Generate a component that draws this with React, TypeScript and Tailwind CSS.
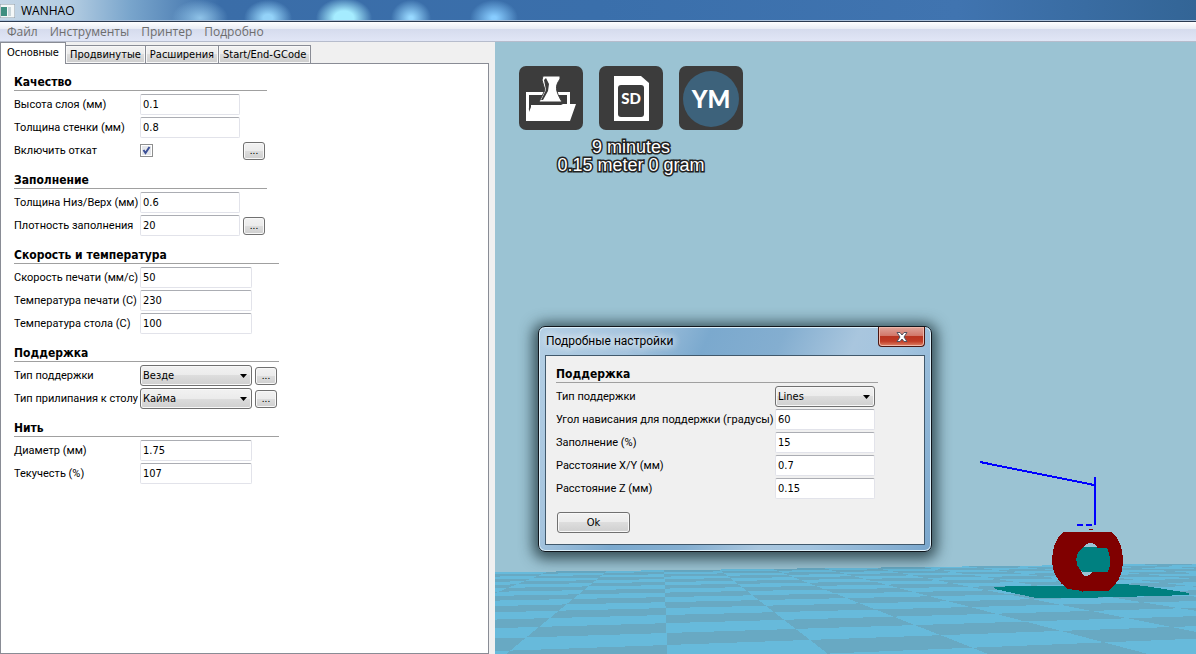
import type { ReactNode } from "react";

const menus = ["Файл", "Инструменты", "Принтер", "Подробно"];
const tabs = ["Основные", "Продвинутые", "Расширения", "Start/End-GCode"];

type Field = {
  id: string;
  label: string;
  value: string | boolean;
  options?: string[];
  more?: boolean;
};

const sections: { title: string; wide?: boolean; fields: Field[] }[] = [
  {
    title: "Качество",
    fields: [
      { id: "layer-height", label: "Высота слоя (мм)", value: "0.1" },
      { id: "wall", label: "Толщина стенки (мм)", value: "0.8" },
      { id: "retraction", label: "Включить откат", value: true, more: true },
    ],
  },
  {
    title: "Заполнение",
    fields: [
      { id: "top-bottom", label: "Толщина Низ/Верх (мм)", value: "0.6" },
      { id: "fill", label: "Плотность заполнения", value: "20", more: true },
    ],
  },
  {
    title: "Скорость и температура",
    wide: true,
    fields: [
      { id: "speed", label: "Скорость печати (мм/с)", value: "50" },
      { id: "print-temp", label: "Температура печати (C)", value: "230" },
      { id: "bed-temp", label: "Температура стола (C)", value: "100" },
    ],
  },
  {
    title: "Поддержка",
    wide: true,
    fields: [
      { id: "support", label: "Тип поддержки", value: "Везде", options: ["Нет", "Везде"], more: true },
      { id: "adhesion", label: "Тип прилипания к столу", value: "Кайма", options: ["Нет", "Кайма"], more: true },
    ],
  },
  {
    title: "Нить",
    wide: true,
    fields: [
      { id: "diameter", label: "Диаметр (мм)", value: "1.75" },
      { id: "flow", label: "Текучесть (%)", value: "107" },
    ],
  },
];

const supportFields: Field[] = [
  { id: "structure", label: "Тип поддержки", value: "Lines", options: ["Lines", "Grid"] },
  { id: "angle", label: "Угол нависания для поддержки (градусы)", value: "60" },
  { id: "support-fill", label: "Заполнение (%)", value: "15" },
  { id: "distance-xy", label: "Расстояние X/Y (мм)", value: "0.7" },
  { id: "distance-z", label: "Расстояние Z (мм)", value: "0.15" },
];

function Control({ field }: { field: Field }) {
  if (typeof field.value === "boolean") {
    return (
      <span className="grid w-[13px]">
        <input
          id={field.id}
          type="checkbox"
          defaultChecked={field.value}
          className="peer col-start-1 row-start-1 size-[13px] appearance-none border border-[#8e8f8f] bg-[#e4e6ea] shadow-[inset_0_0_0_1px_#fff]"
        />
        <svg viewBox="0 0 13 13" className="pointer-events-none invisible col-start-1 row-start-1 size-[13px] peer-checked:visible">
          <path d="M3.5 6 L5.5 9 L9.5 3" fill="none" stroke="#3b4f96" strokeWidth="2" />
        </svg>
      </span>
    );
  }
  if (field.options) {
    return (
      <span className="grid items-center">
        <select
          id={field.id}
          defaultValue={field.value}
          className="col-start-1 row-start-1 h-[21px] w-full appearance-none rounded-[3px] border border-[#707070] bg-[linear-gradient(#f2f2f2,#ebebeb_50%,#dddddd_50%,#cfcfcf)] px-0.5 font-['DejaVu_Sans_Condensed',sans-serif] leading-4 shadow-[inset_0_0_0_1px_#f8f8f8]"
        >
          {field.options.map((o) => (
            <option key={o}>{o}</option>
          ))}
        </select>
        <svg viewBox="0 0 7 4" className="pointer-events-none col-start-1 row-start-1 mr-[5px] h-1 w-[7px] justify-self-end">
          <path d="M0 0h7L3.500 4z" fill="#000" />
        </svg>
      </span>
    );
  }
  return (
    <input
      id={field.id}
      type="text"
      defaultValue={field.value}
      className="h-[21px] w-full rounded-[2px] border border-[#e2e3ea] border-t-[#abadb3] bg-white px-0.5 pb-px font-['DejaVu_Sans_Condensed',sans-serif]"
    />
  );
}

function SectionTitle({ children }: { children: ReactNode }) {
  return (
    <h2 className="mb-0.5 border-b border-[#a0a0a0] font-['DejaVu_Sans_Condensed',sans-serif] text-xs leading-4 font-bold">
      {children}
    </h2>
  );
}

function SettingsPanel() {
  return (
    <form className="flex flex-1 flex-col items-start gap-[10px] border border-[#898c95] bg-white pt-[10px] pl-[13px]">
      {sections.map((s) => (
        <section key={s.title} className={s.wide ? "w-[265px]" : "w-[253px]"}>
          <SectionTitle>{s.title}</SectionTitle>
          {s.fields.map((f) => (
            <div
              key={f.id}
              className={
                s.wide
                  ? "grid h-[23px] grid-cols-[123px_112px_22px] items-center gap-x-[3px]"
                  : "grid h-[23px] grid-cols-[123px_100px_22px] items-center gap-x-[3px]"
              }
            >
              <label htmlFor={f.id} className="whitespace-nowrap">{f.label}</label>
              <Control field={f} />
              {f.more && (
                <button
                  type="button"
                  className="h-[18px] rounded-[3px] border border-[#707070] bg-[linear-gradient(#f2f2f2,#ebebeb_50%,#dddddd_50%,#cfcfcf)] leading-3 shadow-[inset_0_0_0_1px_#f8f8f8]"
                >
                  ...
                </button>
              )}
            </div>
          ))}
        </section>
      ))}
    </form>
  );
}

// Projects a floor grid corner to screen space. Both vanishing points lie just above the far edge.
function project(u: number, v: number) {
  const a = u * 0.0464;
  const c = v * 0.1116;
  const w = 1 + a + c;
  return [(172 + a * 3395 + c * 167.5) / w, (603 + a * 488 + c * 483.5) / w];
}

function quad(u: number, v: number, du = 1, dv = 1) {
  const pts = [project(u, v), project(u + du, v), project(u + du, v + dv), project(u, v + dv)];
  return "M" + pts.map(([x, y]) => x.toFixed(1) + " " + y.toFixed(1)).join("L") + "z";
}

function darkTiles() {
  let d = "";
  for (let u = -8; u < 24; u++) {
    for (let v = -3; v < 15; v++) {
      if ((u + v) % 2 === 0) d += quad(u, v);
    }
  }
  return d;
}

function Scene() {
  return (
    <svg
      viewBox="0 0 701 612"
      preserveAspectRatio="xMinYMin slice"
      shapeRendering="crispEdges"
      className="absolute inset-0 h-full w-full"
    >
      <path d={quad(-8, -3, 32, 18)} fill="#67badb" />
      <path d={darkTiles()} fill="#68a9c3" />
      <path d="M499 545L520 544L569 544L628 542L650 544L694 551V553L625 555L580 556H541L500 547z" fill="#008080" />
      <path d="M568 490H617C624 496 628 506 628 520C628 533 622 543 613 549H588V550H587V549L573 547C563 540 557 531 557 519C557 506 561 496 568 490z" fill="#800000" />
      <path d="M588 505q5-5 9-4q3 1 5 4zM586 529h13q-6 6-10 5q-2-1-3-5z" fill="#9bc3d3" />
      <path d="M588 505h13l1 1h10c4 7 4 17 1 24h-26c-8-7-8-18 1-25z" fill="#008080" />
      <path d="M485 420L599 443M600 435V483M582 483h6M591 483h6" fill="none" stroke="#00f" strokeWidth="2" />
      <path d="M594 487h4v1h-4z" fill="#800000" />
    </svg>
  );
}

function ToolButton({ label, children }: { label: string; children: ReactNode }) {
  return (
    <button type="button" aria-label={label} className="size-16 rounded-[7px] bg-[#3c3c3c]">
      <svg viewBox="0 0 64 64" className="size-16">{children}</svg>
    </button>
  );
}

function Toolbar() {
  return (
    <div className="relative flex w-[272px] flex-col items-center gap-2 pt-6">
      <div className="flex gap-4">
        <ToolButton label="Load">
          <path d="M7 26H51V40H48V29H10V42L7 54z" fill="#fff" />
          <path d="M24 10H41V13C36 20 36 24 43 36H20L26 24L23 14z" fill="#fff" stroke="#3c3c3c" />
          <path d="M27 12L30 18L29 25L24 34H22L27 24L25 14z" fill="#3c3c3c" />
          <path d="M7 54V47L12 39H42L44 38H57L51 55H7z" fill="#fff" />
          <path d="M10 46L12 41V38H10z" fill="#3c3c3c" />
        </ToolButton>
        <ToolButton label="Save toolpath">
          <path d="M15 10H42L50 17V55H15z" fill="#fff" />
          <rect x="19" y="19" width="26" height="32" rx="3" fill="#3c3c3c" />
          <text x="32" y="38" textAnchor="middle" className="fill-white font-[Lato] text-[15px] font-black">SD</text>
        </ToolButton>
        <ToolButton label="YouMagine">
          <circle cx="32" cy="33" r="28" fill="#3d627b" />
          <text x="32" y="42" textAnchor="middle" className="fill-white font-[Lato] text-2xl font-black">YM</text>
        </ToolButton>
      </div>
      <p className="text-center font-['Liberation_Sans',sans-serif] text-lg leading-[18px] text-white [-webkit-text-stroke:3px_#222] [paint-order:stroke_fill]">
        9 minutes
        <br />
        0.15 meter 0 gram
      </p>
    </div>
  );
}

function SupportDialog() {
  return (
    <div
      role="dialog"
      aria-label="Подробные настройки"
      className="absolute top-[284px] left-[43px] w-[394px] rounded-[7px] border border-[#10161c] bg-[linear-gradient(115deg,#b4cfe4,#a5c4de_20%,#7ba9ce_35%,#84aed0_50%,#a9c6de_65%,#a3c4df_75%,#79a6cc)] px-1.5 pb-1.5 shadow-[inset_0_0_0_1px_#dff1fb,0_2px_14px_5px_rgba(20,40,45,0.75)]"
    >
      <div className="flex h-7 items-start justify-between">
        <h1 className="pt-1.5 pl-px font-['Roboto',sans-serif] text-xs leading-4 [text-shadow:0_0_8px_#fff,0_0_8px_#fff]">
          Подробные настройки
        </h1>
        <button
          type="button"
          aria-label="Закрыть"
          className="flex h-5 w-[47px] items-center justify-center rounded-b-[4px] border border-t-0 border-[#4b1712] bg-[linear-gradient(#dfa59a,#d2786a_45%,#b93520_50%,#c03b25_75%,#e08468)] shadow-[inset_0_0_0_1px_#f0b8aa]"
        >
          <svg viewBox="0 0 12 10" className="h-[10px] w-3">
            <path d="M1 0.500h3l2 2.500l2-2.500h3L8 5l3 4.500H8L6 7L4 9.500H1L4 5z" fill="#fff" stroke="#53535f" />
          </svg>
        </button>
      </div>
      <form className="flex flex-col items-start border border-[#41596c] bg-[#f0f0f0] pt-[10px] pb-[11px] pl-[10px]">
        <section className="w-[322px]">
          <SectionTitle>Поддержка</SectionTitle>
          {supportFields.map((f) => (
            <div key={f.id} className="grid h-[23px] grid-cols-[219px_100px] items-center">
              <label htmlFor={f.id} className="whitespace-nowrap">{f.label}</label>
              <Control field={f} />
            </div>
          ))}
        </section>
        <button
          type="button"
          className="mt-3 ml-px h-[21px] w-[73px] rounded-[3px] border border-[#707070] bg-[linear-gradient(#f2f2f2,#ebebeb_50%,#dddddd_50%,#cfcfcf)] font-['DejaVu_Sans_Condensed',sans-serif] shadow-[inset_0_0_0_1px_#f8f8f8]"
        >
          Ok
        </button>
      </form>
    </div>
  );
}

export default function App() {
  return (
    <div className="flex min-h-screen flex-col bg-[#f0f0f0] font-['Roboto',sans-serif] text-[11px] leading-4 text-black">
      <header className="flex h-[22px] items-center gap-1.5 border-b border-[#2b3a50] bg-[radial-gradient(ellipse_28px_20px_at_344px_18px,#a5ecff_35%,transparent),radial-gradient(ellipse_20px_18px_at_411px_18px,#97d8ff_10%,transparent),radial-gradient(ellipse_24px_18px_at_494px_18px,#87ccff_10%,transparent),radial-gradient(ellipse_24px_18px_at_268px_18px,#93d2f8_20%,transparent),radial-gradient(ellipse_28px_18px_at_200px_18px,#8fc3e8,transparent),linear-gradient(90deg,#c4d6e6,#b4cde2_70px,#79a5cc_130px,#3a6da8_220px,#3a6fab_50%,#4074b0_80%,#336596)] shadow-[inset_0_-1px_0_#a9c0da]">
        <svg viewBox="0 0 15 14" className="h-[14px] w-[15px]">
          <rect x="0" y="0" width="15" height="14" fill="#f4f8f8" stroke="#8a98a4" />
          <rect x="1" y="3" width="6" height="9" fill="#3f8f80" />
          <rect x="8" y="3" width="3" height="9" fill="#c9d6da" />
        </svg>
        <span className="font-['Open_Sans',sans-serif] text-xs">WANHAO</span>
      </header>
      <nav className="flex h-5 items-center gap-3 border-b border-[#b6bccc] bg-[linear-gradient(#fff,#e9edf5_35%,#d5dbed_35%,#e1e6f6)] px-[7px] font-['Open_Sans',sans-serif] text-xs text-[#6d6d6d]">
        {menus.map((m) => (
          <button key={m} type="button">{m}</button>
        ))}
      </nav>
      <main className="flex flex-1">
        <div className="flex w-[495px] shrink-0 flex-col pr-1.5">
          <div role="tablist" className="flex h-[21px] items-end font-['DejaVu_Sans_Condensed',sans-serif]">
            {tabs.map((t, i) => (
              <button
                key={t}
                type="button"
                role="tab"
                aria-selected={i === 0}
                className={
                  i === 0
                    ? "z-10 -mb-px h-[22px] border border-b-0 border-[#898c95] bg-white px-1.5 pb-0.5"
                    : "h-[18px] border border-b-0 border-l-0 border-[#898c95] bg-[linear-gradient(#f3f3f3,#ebebeb_50%,#dddddd_50%,#cdcdcd)] px-1 shadow-[inset_0_0_0_1px_#f8f8f8]"
                }
              >
                {t}
              </button>
            ))}
          </div>
          <SettingsPanel />
        </div>
        <div className="relative flex-1 overflow-hidden bg-[#9bc3d3]">
          <Scene />
          <Toolbar />
          <SupportDialog />
        </div>
      </main>
    </div>
  );
}
